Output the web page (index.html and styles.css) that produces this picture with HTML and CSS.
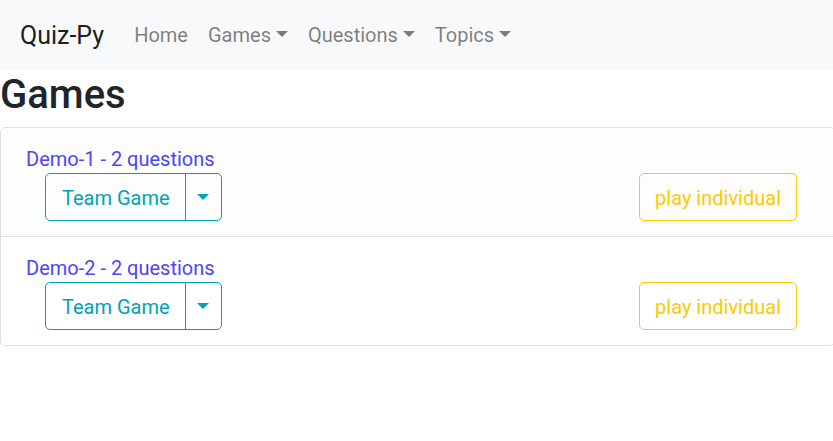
FILE: index.html
```html
<!DOCTYPE html>
<html lang="en">
<head>
<meta charset="utf-8">
<meta name="viewport" content="width=device-width, initial-scale=1">
<title>Quiz-Py</title>
<link rel="stylesheet" href="styles.css">
</head>
<body>
<nav class="navbar">
  <a class="brand" href="#">Quiz-Py</a>
  <ul class="nav-list">
    <li><a class="nav-link" href="#">Home</a></li>
    <li><a class="nav-link caret" href="#">Games</a></li>
    <li><a class="nav-link caret" href="#">Questions</a></li>
    <li><a class="nav-link caret" href="#">Topics</a></li>
  </ul>
</nav>
<main>
  <h1 class="title">Games</h1>
  <ul class="game-list">
    <li class="game">
      <a class="game-link" href="#">Demo-1 - 2 questions</a>
      <div class="actions">
        <div class="btn-group">
          <button class="btn btn-team" type="button">Team Game</button>
          <button class="btn btn-team btn-split caret" type="button" aria-label="More options"></button>
        </div>
        <button class="btn btn-solo" type="button">play individual</button>
      </div>
    </li>
    <li class="game">
      <a class="game-link" href="#">Demo-2 - 2 questions</a>
      <div class="actions">
        <div class="btn-group">
          <button class="btn btn-team" type="button">Team Game</button>
          <button class="btn btn-team btn-split caret" type="button" aria-label="More options"></button>
        </div>
        <button class="btn btn-solo" type="button">play individual</button>
      </div>
    </li>
  </ul>
</main>
</body>
</html>
```
FILE: styles.css
```css
* {
  box-sizing: border-box;
}

body {
  margin: 0;
  background: #fff;
  color: #212529;
  font-family: Roboto, sans-serif;
  font-size: 20px;
  line-height: 30px;
  overflow-x: hidden;
}

a {
  text-decoration: none;
}

ul {
  margin: 0;
  padding: 0;
  list-style: none;
}

.navbar {
  display: flex;
  align-items: center;
  padding: 10px 20px 9px;
  background: #f8f9fb;
}

.brand {
  margin-right: 20px;
  padding: 6px 0;
  color: rgba(0, 0, 0, 0.9);
  font-size: 25px;
  line-height: 37px;
}

.nav-list {
  display: flex;
}

.nav-link {
  display: block;
  padding: 10px;
  color: rgba(0, 0, 0, 0.5);
}

.caret::after {
  content: "";
  display: inline-block;
  margin-left: 5px;
  vertical-align: 5px;
  border-top: 6px solid;
  border-right: 6px solid transparent;
  border-left: 6px solid transparent;
}

.title {
  margin: 0 0 6px;
  font-size: 40px;
  font-weight: 500;
  line-height: 52px;
}

.game-list {
  margin-right: -2px;
  border: 1px solid #dfdfdf;
  border-radius: 5px;
  overflow: hidden;
}

.game {
  padding: 17px 37px 15px 25px;
}

.game + .game {
  border-top: 1px solid #dfdfdf;
}

.game:nth-child(odd) {
  background: #fdfdfd;
}

.game-link {
  display: block;
  color: #4b45ff;
  line-height: 28px;
}

.actions {
  display: flex;
  justify-content: space-between;
  padding-left: 19px;
}

.btn-group {
  display: flex;
}

.btn {
  padding: 9px 15px 7px;
  border: 1px solid;
  border-radius: 5px;
  background: transparent;
  font: inherit;
}

.btn-team {
  padding-left: 16px;
  color: #00a2b8;
}

.btn-group .btn:first-child {
  border-top-right-radius: 0;
  border-bottom-right-radius: 0;
}

.btn-split {
  margin-left: -1px;
  padding-right: 12px;
  padding-left: 11px;
  border-top-left-radius: 0;
  border-bottom-left-radius: 0;
}

.btn-split::after {
  margin-left: 0;
}

.btn-solo {
  color: #ffc800;
}
```
